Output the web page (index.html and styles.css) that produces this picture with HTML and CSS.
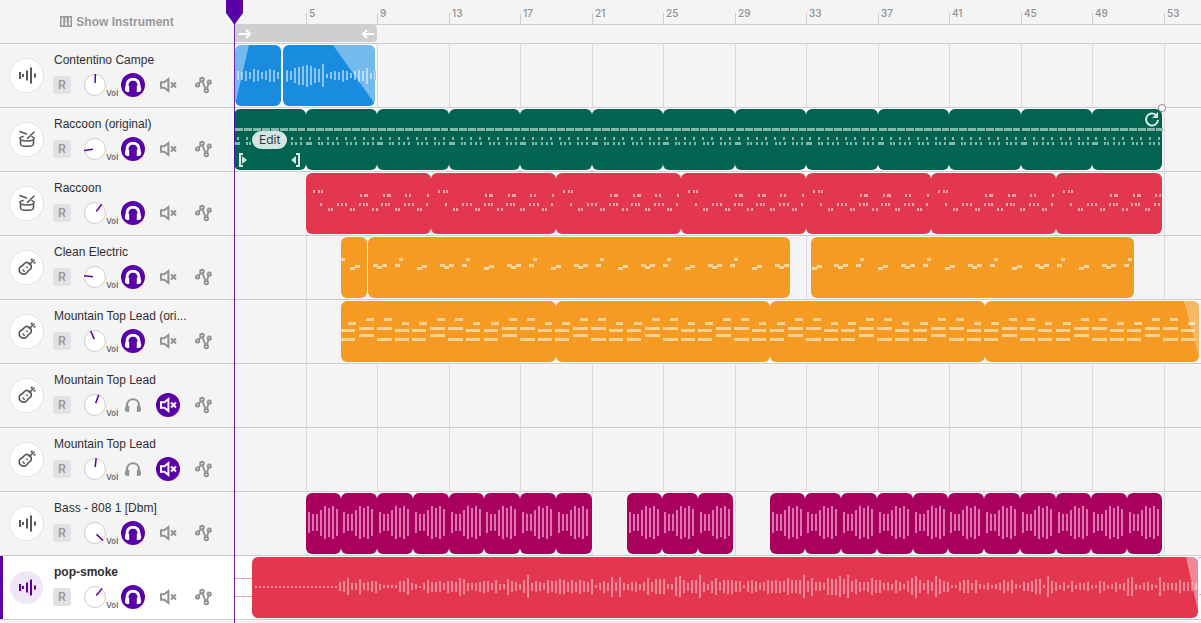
FILE: index.html
```html
<!DOCTYPE html>
<html lang="en">
<head>
<meta charset="utf-8">
<title>Studio – Tracks</title>
<meta name="viewport" content="width=device-width, initial-scale=1">
<link rel="stylesheet" href="styles.css">
</head>
<body>
<svg class="defs" aria-hidden="true">
  <symbol id="wave" viewBox="0 0 33 33"><path d="M10 13v7M13 15v3M17 11.5v10M21 8.5v16M25 14.5v4" fill="none" stroke="currentColor" stroke-width="2"/></symbol>
  <symbol id="drum" viewBox="0 0 33 33"><g fill="none" stroke="currentColor" stroke-width="1.6" stroke-linecap="round"><path d="M10 8.500l6.500 2.500M24 9l-6.500 6.500M13 13.500c-2 .4-3 1.100-3 2 0 1.500 3 2.500 7 2.500s7-1 7-2.500c0-.8-.8-1.400-2-1.700"/><path d="M10.500 17.500v3.500c0 1.500 2.800 2.300 6.500 2.300s6.500-.8 6.500-2.300v-3.500"/></g></symbol>
  <symbol id="guitar" viewBox="0 0 33 33"><g fill="none" stroke="currentColor" stroke-width="1.600" stroke-linecap="round"><path d="M18.500 12c-1.800-1.200-3.700-.4-4.500 1-.7 1.100-1.500 1.600-2.700 2.200-2.400 1.200-2.800 4-1.300 6.100s4.600 2.500 6.500.8c1-.9 1.300-1.900 2.300-2.700 1-.9 2.100-1.400 2.500-2.900.4-1.500-.2-2.900-1.300-3.700z"/><path d="M19.500 13.500l4.500-4.500M13 19l1.200 1.200M17 16l.3.300M21.500 9l.5-.8M24.300 12l.7-.5"/></g></symbol>
  <symbol id="solo" viewBox="0 0 24 24"><path d="M6 15.500v-3C6 8.500 8.600 6.300 12 6.300s6 2.200 6 6.200v3" fill="none" stroke="currentColor" stroke-width="var(--band)"/><path d="M4.300 14.300l1.200-2 2.700.8V19H6.500c-1.700 0-2.700-1-2.700-2.500zM19.700 14.300l-1.200-2-2.700.8V19h1.700c1.700 0 2.700-1 2.700-2.500z" fill="currentColor"/></symbol>
  <symbol id="mute" viewBox="0 0 24 24"><path d="M5 9.300h3.400l4-3.300v12l-4-3.300H5zM15 9.500l5 5M20 9.500l-5 5" fill="none" stroke="currentColor" stroke-width="2"/></symbol>
  <symbol id="auto" viewBox="0 0 24 24"><g fill="none" stroke="currentColor" stroke-width="1.900"><circle cx="6.600" cy="12" r="1.600"/><circle cx="11" cy="6.500" r="1.800"/><circle cx="15.300" cy="17.500" r="1.800"/><circle cx="18.300" cy="9" r="1.600"/><path d="M7.700 10.700L9.800 8.200M11.500 8.300l3 7.500M15.800 15.700l2-5.200"/></g></symbol>
</svg>

<main class="studio">
  <header class="top">
    <button class="show" type="button">
      <svg width="12" height="11" viewBox="0 0 12 11" aria-hidden="true"><path d="M.8.8h10.400v9.400H.8zM4.200 6v4M7.800 6v4" fill="none" stroke="currentColor" stroke-width="1.600"/><path d="M3.200 1h2.200v6H3.200zM6.700 1h2.200v6H6.700z" fill="currentColor"/></svg>
      Show Instrument
    </button>
    <div class="ruler">
      <ol class="marks" id="marks"></ol>
      <div class="loop">
        <svg width="12" height="10" viewBox="0 0 12 10" aria-hidden="true"><path d="M0 5h11M7 1l4 4-4 4" fill="none" stroke="currentColor" stroke-width="2"/></svg>
        <svg width="12" height="10" viewBox="0 0 12 10" aria-hidden="true"><path d="M12 5H1M5 1L1 5l4 4" fill="none" stroke="currentColor" stroke-width="2"/></svg>
      </div>
    </div>
  </header>
  <ul class="tracks" id="tracks"></ul>
  <svg class="playhead" width="17" viewBox="0 0 17 24" height="24" aria-hidden="true"><path d="M0 0h17v13L9 24H8L0 13z" fill="currentColor"/></svg>
</main>
<script src="app.js"></script>
</body>
</html>
```

FILE: styles.css
```css
* { box-sizing: border-box; }

:root {
  --purple: #5900a6;
  --line: #cfcfd1;
  --side: 234px;
}

body {
  margin: 0;
  background: #f4f4f4;
  color: #2f2f33;
  font-family: Inter, "Liberation Sans", sans-serif;
}

button {
  margin: 0;
  padding: 0;
  border: 0;
  background: none;
  font: inherit;
  color: inherit;
  cursor: pointer;
}

svg { display: block; flex: none; }
.defs { position: absolute; width: 0; height: 0; }

.studio {
  position: relative;
  min-height: 100vh;
  overflow: hidden;
}

.studio::after {
  content: "";
  position: absolute;
  top: 0;
  bottom: 0;
  left: var(--side);
  width: 1px;
  background: var(--purple);
  opacity: 0.85;
}

.playhead {
  position: absolute;
  top: 0;
  left: 226px;
  color: var(--purple);
}

.top {
  display: flex;
  height: 44px;
  border-bottom: 1px solid var(--line);
}

.show {
  display: flex;
  flex: none;
  align-items: center;
  justify-content: center;
  gap: 4px;
  width: var(--side);
  font-family: "Liberation Sans", sans-serif;
  font-size: 12px;
  font-weight: 700;
  color: #9a9a9c;
}

.ruler { flex: 1; min-width: 0; }

.marks {
  position: relative;
  height: 25px;
  margin: 0;
  padding: 0;
  border-bottom: 1px solid var(--line);
  list-style: none;
}

.marks li {
  position: absolute;
  bottom: 0;
  height: 11px;
  padding-left: 2px;
  border-left: 1px solid var(--line);
  font-size: 10px;
  line-height: 1px;
  font-weight: 500;
  color: #909092;
}

.loop {
  display: flex;
  align-items: center;
  justify-content: space-between;
  width: 143px;
  height: 17px;
  padding: 0 3px 0 5px;
  border-radius: 4px;
  background: #cfcfcf;
  color: #fff;
}

.tracks { margin: 0; padding: 0; list-style: none; }

.track {
  display: flex;
  height: 64px;
  border-bottom: 1px solid var(--line);
}

.track.selected { background: #fff; }

.side {
  display: flex;
  flex: none;
  width: var(--side);
}

.selected .side { box-shadow: inset 3px 0 var(--purple); }

.badge {
  width: 33px;
  height: 33px;
  margin: 15px 10px;
  border-radius: 50%;
  background: #fff;
  box-shadow: 0 0 0 1px #e6e6e8;
  color: #58585b;
}

.selected .badge { background: #efe7f7; box-shadow: none; color: var(--purple); }

.panel { padding-top: 8px; }

.name {
  width: 140px;
  margin: 0 0 5px 1px;
  font-family: "Liberation Sans", sans-serif;
  font-size: 12px;
  line-height: 16px;
  font-weight: 400;
  white-space: nowrap;
}

.selected .name { font-weight: 700; }

.controls {
  display: grid;
  grid-template-columns: 31px 37px 35px 35px 24px;
  align-items: center;
}

.arm {
  width: 18px;
  height: 18px;
  border-radius: 3px;
  background: #e2e2e4;
  font-size: 12px;
  line-height: 18px;
  font-weight: 600;
  color: #99999b;
}

.knob { position: relative; display: flex; align-items: flex-end; height: 24px; }
.knob svg { margin-bottom: 1px; }
.knob input { position: absolute; inset: 0; width: 22px; margin: 0; opacity: 0; }
.knob span { font-size: 8px; line-height: 8px; font-weight: 600; color: #6c6c6e; }

.toggle {
  --band: 2px;
  width: 24px;
  height: 24px;
  border-radius: 50%;
  color: #929294;
}

.toggle.on { --band: 3px; background: var(--purple); color: #fff; }

.lane { position: relative; flex: 1; min-width: 0; }
.lane > svg { width: 100%; height: 63px; overflow: hidden; }

.edit {
  position: absolute;
  top: 23px;
  left: 18px;
  padding: 0 7px;
  border-radius: 9px;
  background: #d5e5e1;
  font-size: 12px;
  line-height: 18px;
  color: #2b3d39;
}

.handle {
  position: absolute;
  top: -4px;
  left: 924px;
  width: 8px;
  height: 8px;
  border: 1px solid #88888a;
  border-radius: 50%;
  background: #fff;
}
```

FILE: app.js
```js
const BAR = 17.875;
const barX = bars => Math.floor(0.5 + bars * BAR);

const marks = document.getElementById("marks");
for (let bar = 4; bar <= 52; bar += 4) {
  const li = document.createElement("li");
  li.style.left = barX(bar) + "px";
  li.textContent = bar + 1;
  marks.append(li);
}

const rect = (x, y, w, h) => `<rect x="${x}" y="${y}" width="${w}" height="${h}"/>`;

/* Rounded loop segments; edges holds the x of every boundary. */
function clip(edges, color, notes, noteColor, fades = "") {
  const left = edges[0], right = edges[edges.length - 1];
  let s = `<rect x="${left}" y="0" width="${right - left + 1}" height="63" rx="5" fill="#fcfcfc"/>`;
  for (let i = 0; i + 1 < edges.length; i++) {
    s += `<rect x="${edges[i]}" y="1" width="${edges[i + 1] - edges[i]}" height="61" rx="6" fill="${color}"/>`;
  }
  return s + `<g fill="${noteColor}">${notes}</g>` + fades;
}

function steps(start, end, size) {
  const out = [];
  for (let i = 0; start + i * size < end - 2; i++) out.push(Math.floor(start + i * size));
  return out.concat(end);
}

/* Vertical bars, one every 4px, heights in px around the middle line. */
function bars(x, mid, heights) {
  return heights.map((h, i) => rect(x + i * 4, mid - Math.round(h / 2), 2, h)).join("");
}

function blue() {
  const a = bars(3, 32, [9, 8, 10, 7, 13, 11, 7, 9, 13, 12, 7]);
  const b = bars(52, 32, [12, 9, 15, 18, 19, 22, 19, 15, 13, 23, 4, 7, 9, 8, 12, 9, 5, 9, 12, 10, 16, 6, 9]);
  return clip([1, 47], "#1a8ce0", a, "#8cc5f0",
      '<path d="M1 61V7a6 6 0 0 1 6-6h8z" fill="#fff" opacity=".4"/>') +
    clip([49, 141], "#1a8ce0", b, "#8cc5f0",
      '<path d="M99 1h36a6 6 0 0 1 6 6v53z" fill="#fff" opacity=".4"/>');
}

function green() {
  const edges = steps(0.5, 928, 71.5);
  let n = "";
  edges.slice(0, -1).forEach(x => {
    for (let k = 0; k < 8; k++) {
      n += rect(x + 1 + k * 9, 20, k === 7 ? 7 : 8, 3);
      n += rect(x + 3 + k * 9, 29, 2, 3);
    }
    [0, 2, 4, 12, 15, 21, 26, 31, 40, 44, 49, 57, 61, 66].forEach(d => { n += rect(x + d, 34, 2, 3); });
  });
  return clip(edges, "#006450", n, "#83b8aa") +
    '<g fill="none" stroke="#d8ebe6" stroke-width="2"><path d="M9 46H6v12h3M62 46h3v12h-3"/>' +
    '<path d="M922 7A6 6 0 1 0 924 12"/></g>' +
    '<path d="M8 48l5 4-5 4zM62 48l-5 4 5 4zM924 4v6h-6z" fill="#d8ebe6"/>';
}

function red() {
  const edges = steps(72, 928, 125);
  const rows = [
    [18, [7, 12, 15]],
    [22, [54, 58, 60, 77, 81, 83, 99, 103, 121]],
    [31, [14, 31, 35, 39, 53, 57, 60, 75, 79, 82, 98, 102, 106, 120]],
    [36, [22, 25, 44, 47, 66, 70, 89, 92, 111, 114]]
  ];
  let n = "";
  edges.slice(0, -1).forEach(x => rows.forEach(([y, xs]) => xs.forEach(d => {
    if (x + d < 926) n += rect(x + d, y, 2, 3);
  })));
  return clip(edges, "#e33750", n, "#f5a3af");
}

function orange() {
  const riff = [[0, 28, 5], [4, 30, 5], [9, 28, 5], [22, 28, 5], [26, 22, 4], [44, 31, 5], [49, 29, 5]];
  const run = (from, end) => {
    let n = "";
    for (let x = from; x < end; x += 67) {
      riff.forEach(([d, y, w]) => { if (x + d + w <= end) n += rect(x + d, y, w, 3); });
    }
    return n;
  };
  const c = "#f59b24", l = "#fbd59b";
  return clip([107, 133], c, rect(107, 22, 4, 3) + rect(116, 31, 5, 3) + rect(121, 29, 5, 3), l) +
    clip([134, 556], c, run(139, 556), l) +
    clip([577, 900], c, rect(578, 31, 5, 3) + rect(583, 29, 5, 3) + run(600, 900), l);
}

function lead() {
  const rows = [
    [18, [[25, 8], [43, 8]]], [22, [[7, 8], [61, 7]]], [27, [[18, 15], [36, 15]]],
    [29, [[0, 14], [54, 14]]], [34, [[18, 15]]], [38, [[0, 14], [36, 15], [54, 14]]]
  ];
  let n = "";
  for (let i = 0; i < 12; i++) {
    const x = Math.floor(107 + i * 71.5);
    rows.forEach(([y, list]) => list.forEach(([d, w]) => { n += rect(x + d, y, w, 3); }));
  }
  return clip([107, 322, 536, 751, 965], "#f59b24", n, "#fbd294",
    '<path d="M950 1h9a6 6 0 0 1 6 6v50z" fill="#fff" opacity=".3"/>');
}

function bass() {
  return [[72, 358], [393, 499], [536, 928]].map(([a, b]) => {
    const edges = steps(a, b, 35.75);
    const n = edges.slice(0, -1).map(x => bars(x + 2, 31, [21, 17, 17, 26, 33, 29, 33, 27])).join("");
    return clip(edges, "#a8005c", n, "#dc74b0");
  }).join("");
}

function smoke() {
  const h = Array(21).fill(2).concat([
    9, 11, 17, 7, 7, 15, 7, 9, 11, 12, 6, 3, 3, 3, 3, 11, 11, 17, 7, 5, 2, 7, 13, 10, 10, 11, 7, 12, 11, 10, 18, 15,
    8, 7, 8, 10, 12, 11, 7, 13, 6, 5, 16, 11, 9, 6, 13, 23, 8, 11, 9, 7, 13, 11, 12, 15, 14, 10, 13, 10, 14, 11, 10,
    15, 3, 7, 12, 8, 20, 9, 20, 7, 6, 9, 10, 6, 9, 17, 10, 15, 15, 15, 5, 6, 19, 21, 13, 8, 13, 13, 23, 10, 6, 12,
    17, 9, 13, 14, 14, 11, 11, 3, 11, 13, 11, 7, 9, 14, 12, 13, 12, 11, 17, 13, 13, 14, 23, 11, 18, 9, 9, 7, 17, 16,
    16, 21, 15, 23, 11, 15, 10, 9, 10, 17, 13, 13, 7, 9, 6, 13, 9, 5, 11, 17, 22, 13, 7, 14, 9, 21, 15, 11, 10, 3,
    3, 9, 13, 13, 7, 13, 5, 4, 7, 3, 5, 7, 13, 9, 13, 5, 3, 9, 8, 11, 15, 15, 3, 21, 12, 9, 4, 9, 3, 11, 4, 7, 7,
    9, 4, 3, 12, 9, 4, 5, 10, 5, 8, 18, 19, 6, 4, 7, 9, 6, 3, 19, 9, 7, 7, 8, 13, 9, 9, 9, 7]);
  return '<path d="M0 22.500h18M0 40.500h18M964 38.500h40M964 1.500h40" stroke="#eba3b6"/>' +
    clip([18, 964], "#e33750", bars(21, 31, h), "#f08a99",
      '<path d="M952 1h6a6 6 0 0 1 6 6v48z" fill="#fff" opacity=".4"/>');
}

const TRACKS = [
  { name: "Contentino Campe", icon: "wave", angle: 2, solo: true, draw: blue },
  { name: "Raccoon (original)", icon: "drum", angle: 262, solo: true, draw: green, looped: true },
  { name: "Raccoon", icon: "drum", angle: 38, solo: true, draw: red },
  { name: "Clean Electric", icon: "guitar", angle: 277, solo: true, draw: orange },
  { name: "Mountain Top Lead (ori...", icon: "guitar", angle: 337, solo: true, draw: lead },
  { name: "Mountain Top Lead", icon: "guitar", angle: 20, mute: true },
  { name: "Mountain Top Lead", icon: "guitar", angle: 6, mute: true },
  { name: "Bass - 808 1 [Dbm]", icon: "wave", angle: 133, solo: true, draw: bass },
  { name: "pop-smoke", icon: "wave", angle: 40, solo: true, draw: smoke, selected: true }
];

let grid = "";
for (let bar = 4; bar <= 52; bar += 4) grid += rect(barX(bar), 0, 1, 64);

const toggle = (id, label, on) =>
  `<button type="button" class="toggle${on ? " on" : ""}" aria-label="${label}" aria-pressed="${!!on}">
    <svg width="24" height="24" aria-hidden="true"><use href="#${id}"/></svg></button>`;

document.getElementById("tracks").innerHTML = TRACKS.map(t => `
  <li class="track${t.selected ? " selected" : ""}">
    <div class="side">
      <svg class="badge" aria-hidden="true"><use href="#${t.icon}"/></svg>
      <div class="panel">
        <h2 class="name">${t.name}</h2>
        <div class="controls">
          <button type="button" class="arm" aria-label="Record arm">R</button>
          <label class="knob">
            <svg width="22" height="22" viewBox="0 0 22 22" aria-hidden="true">
              <circle cx="11" cy="11" r="10.500" fill="#fff" stroke="#cdcdd0"/>
              <path d="M11 9V0" stroke="#5900a6" stroke-width="1.500" transform="rotate(${t.angle} 11 11)"/>
            </svg>
            <input type="range" min="0" max="360" value="${t.angle}"><span>Vol</span>
          </label>
          ${toggle("solo", "Solo", t.solo)}
          ${toggle("mute", "Mute", t.mute)}
          ${toggle("auto", "Automation", false)}
        </div>
      </div>
    </div>
    <div class="lane">
      <svg aria-hidden="true"><g fill="#dadadc">${grid}</g>${t.draw ? t.draw() : ""}</svg>
      ${t.looped ? '<button type="button" class="edit">Edit</button><span class="handle"></span>' : ""}
    </div>
  </li>`).join("");
```
